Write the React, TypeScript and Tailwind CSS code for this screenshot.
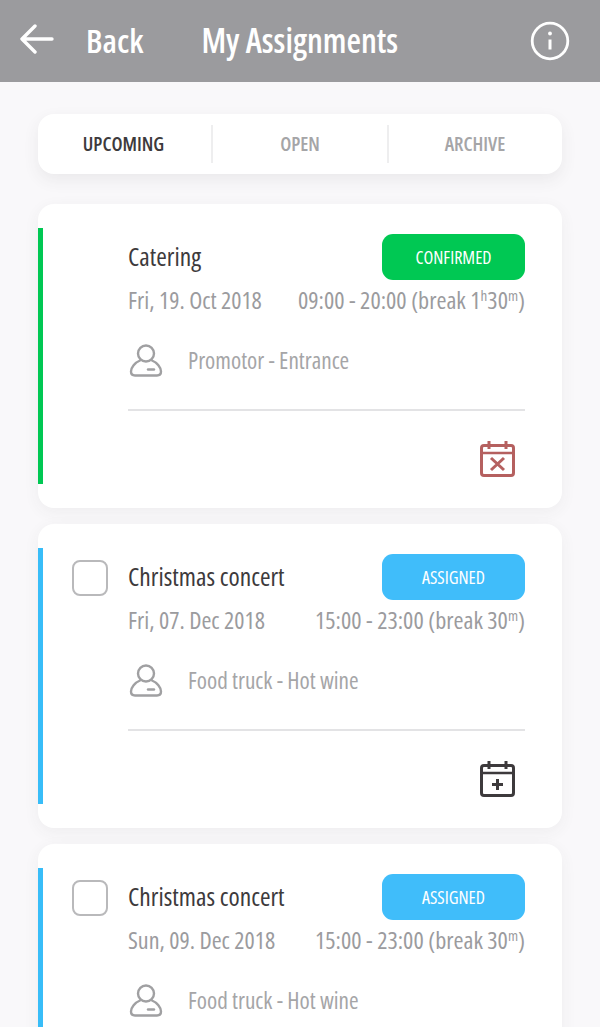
import type { ReactNode } from 'react'

type Assignment = {
  title: string
  date: string
  time: ReactNode
  role: string
  status: string
  accent: string
  badge: string
  selectable: boolean
  action?: 'remove' | 'add'
}

const assignments: Assignment[] = [
  {
    title: 'Catering',
    date: 'Fri, 19. Oct 2018',
    time: (
      <>
        09:00 - 20:00 (break 1<sup className="text-[15px]">h</sup>30<sup className="text-[15px]">m</sup>)
      </>
    ),
    role: 'Promotor - Entrance',
    status: 'CONFIRMED',
    accent: 'bg-[#00c853]',
    badge: 'bg-[#00c853]',
    selectable: false,
    action: 'remove',
  },
  {
    title: 'Christmas concert',
    date: 'Fri, 07. Dec 2018',
    time: (
      <>
        15:00 - 23:00 (break 30<sup className="text-[15px]">m</sup>)
      </>
    ),
    role: 'Food truck - Hot wine',
    status: 'ASSIGNED',
    accent: 'bg-[#38bdf8]',
    badge: 'bg-[#40bdfa]',
    selectable: true,
    action: 'add',
  },
  {
    title: 'Christmas concert',
    date: 'Sun, 09. Dec 2018',
    time: (
      <>
        15:00 - 23:00 (break 30<sup className="text-[15px]">m</sup>)
      </>
    ),
    role: 'Food truck - Hot wine',
    status: 'ASSIGNED',
    accent: 'bg-[#38bdf8]',
    badge: 'bg-[#40bdfa]',
    selectable: true,
    action: 'add',
  },
]

function BackArrow() {
  return (
    <svg width="34" height="32" viewBox="0 0 34 32" fill="none" stroke="#fff" strokeWidth="3.4" strokeLinecap="round" strokeLinejoin="round" className="mb-[2px] ml-[2px] shrink-0">
      <path d="M32 15H3M15 2L2 15l13 13" />
    </svg>
  )
}

function InfoIcon() {
  return (
    <svg width="40" height="40" viewBox="0 0 40 40" fill="none" stroke="#fff" className="ml-auto shrink-0">
      <circle cx="20" cy="20" r="17.8" strokeWidth="2.8" />
      <path d="M20 18.5v10" strokeWidth="3" />
      <circle cx="20" cy="12.5" r="1.9" fill="#fff" stroke="none" />
    </svg>
  )
}

function PersonIcon() {
  return (
    <svg width="34" height="33" viewBox="0 0 34 33" fill="none" stroke="#a0a0a2" strokeWidth="2.4" className="shrink-0">
      <circle cx="17" cy="9.5" r="8" />
      <path d="M11 16.5C6 18.5 2 23.5 2 27.5c0 2.5 1.5 4 4 4h22c2.5 0 4-1.500 4-4 0-4-4-9-9-11" strokeLinecap="round" />
      <path d="M19 25.500h6" strokeLinecap="round" />
    </svg>
  )
}

function CalendarIcon({ kind }: { kind: 'remove' | 'add' }) {
  const color = kind === 'remove' ? '#b5605f' : '#3d3a3c'
  return (
    <svg width="35" height="36" viewBox="0 0 35 36" fill="none" stroke={color} strokeWidth="3">
      <rect x="1.500" y="4.500" width="32" height="30" rx="2.500" />
      <path d="M1.500 12h32" strokeWidth="2.500" />
      <path d="M9 0v8M26 0v8" />
      {kind === 'remove' ? <path d="M11 17l13 12M24 17L11 29" /> : <path d="M17.500 18v11M12 23.500h11" />}
    </svg>
  )
}

function AssignmentCard({ item }: { item: Assignment }) {
  return (
    <div className="flex h-[304px] shrink-0 rounded-2xl bg-white py-6 shadow-[0_4px_16px_rgba(60,60,70,0.06)]">
      <div className={`w-[5px] shrink-0 ${item.accent}`} />
      <div className="w-[85px] shrink-0 pl-[29px] pt-2">
        {item.selectable && <div className="mt-[4px] size-9 rounded-lg border-2 border-[#b9b9bb] bg-white" />}
      </div>
      <div className="flex w-[397px] flex-col pt-1.5">
        <div className="flex h-[46px] items-center justify-between">
          <span className="pb-0.5 text-[25.5px] text-[#3d3a3c]">{item.title}</span>
          <span
            className={`flex h-[46px] w-[143px] items-center justify-center rounded-[11px] text-[18px] font-medium text-white ${item.badge}`}
          >
            {item.status}
          </span>
        </div>
        <div className="mt-[5px] flex h-[30px] items-center justify-between text-[24px] text-[#9b9b9e]">
          <span>{item.date}</span>
          <span className="text-[24.2px]">{item.time}</span>
        </div>
        <div className="mt-[21px] flex h-[48px] items-center gap-[25px] pl-[1px] text-[23.2px] text-[#a5a5a7]">
          <PersonIcon />
          <span>{item.role}</span>
        </div>
        <div className="mt-[25px] h-0.5 bg-[#e3e3e5]" />
        <div className="mr-[10px] mt-[30px] flex justify-end">
          {item.action && <CalendarIcon kind={item.action} />}
        </div>
      </div>
    </div>
  )
}

export default function App() {
  return (
    <div className="flex h-[1027px] w-[600px] flex-col overflow-hidden bg-[#f9f8fa] font-['Open_Sans','Noto_Sans',sans-serif] [font-stretch:75%]">
      <header className="flex h-[82px] shrink-0 items-center bg-[#9b9b9e] pl-[18px] pr-[30px] text-white">
        <BackArrow />
        <span className="ml-[32px] text-[33px] font-semibold">Back</span>
        <span className="ml-[58px] text-[33.3px] font-semibold">My Assignments</span>
        <InfoIcon />
      </header>
      <main className="flex flex-col gap-4 px-[38px] pt-8">
        <div className="mb-3.5 flex h-[60px] shrink-0 items-center rounded-2xl bg-white text-[19.5px] font-semibold shadow-[0_6px_16px_rgba(60,60,70,0.08)]">
          <div className="flex-1 pr-[2px] text-center text-[#3d3a3c]">UPCOMING</div>
          <div className="h-[38px] w-0.5 bg-[#eeeeef]" />
          <div className="w-[174px] text-center text-[#a5a5a7]">OPEN</div>
          <div className="h-[38px] w-0.5 bg-[#eeeeef]" />
          <div className="w-[173px] pr-[1px] text-center text-[#a5a5a7]">ARCHIVE</div>
        </div>
        {assignments.map((item, i) => (
          <AssignmentCard key={i} item={item} />
        ))}
      </main>
    </div>
  )
}
